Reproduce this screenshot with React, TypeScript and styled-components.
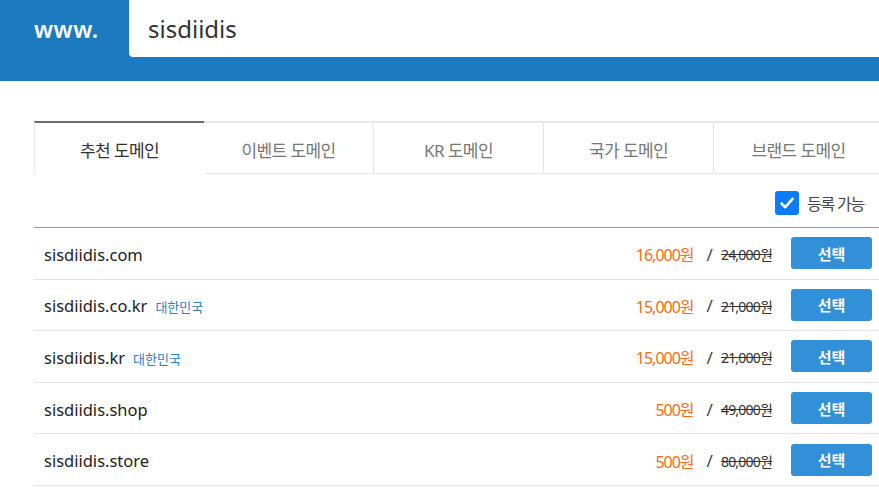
import React from 'react'
import styled, { createGlobalStyle } from 'styled-components'

const GlobalStyle = createGlobalStyle`
  html, body {
    margin: 0;
    padding: 0;
    background: #fff;
    overflow: hidden;
  }
  body {
    font-family: "Noto Sans", "Noto Sans CJK KR", sans-serif;
    color: #333;
  }
`

const Header = styled.header`
  display: flex;
  align-items: flex-start;
  height: 81px;
  background: #1c7bbf;
`

const Prefix = styled.div`
  display: flex;
  align-items: center;
  width: 95px;
  height: 57px;
  padding-left: 34px;
  color: #fff;
  font-size: 23px;
  font-weight: 600;
  letter-spacing: 0.5px;
`

const SearchBox = styled.div`
  flex: 1;
  display: flex;
  align-items: center;
  height: 57px;
  padding-left: 19px;
  background: #fff;
  border-bottom-left-radius: 4px;
  font-size: 24px;
  color: #333;
`

const Main = styled.main`
  width: 850px;
  margin: 40px 0 0 34px;
`

const Tabs = styled.div`
  display: grid;
  grid-template-columns: repeat(5, 170px);
`

const Tab = styled.div<{ $active?: boolean }>`
  display: flex;
  align-items: center;
  justify-content: center;
  box-sizing: border-box;
  height: 53px;
  padding-top: 2px;
  border-top: 2px solid ${p => (p.$active ? '#6b6b6b' : '#e8e8e8')};
  border-right: ${p => (p.$active ? 'none' : '1px solid #e6e6e6')};
  border-left: ${p => (p.$active ? '1px solid #e6e6e6' : 'none')};
  border-bottom: 1px solid ${p => (p.$active ? 'transparent' : '#e6e6e6')};
  font-size: 17px;
  color: ${p => (p.$active ? '#333' : '#777')};
  letter-spacing: -0.6px;
`

const FilterRow = styled.div`
  display: flex;
  justify-content: flex-end;
  align-items: center;
  box-sizing: border-box;
  height: 53px;
  padding: 4px 20px 0 0;
`

const CheckLabel = styled.label`
  display: flex;
  align-items: center;
  gap: 8px;
  font-size: 16px;
  color: #444;
  letter-spacing: -1.2px;
`

const CheckBox = styled.span`
  display: inline-flex;
  align-items: center;
  justify-content: center;
  width: 24px;
  height: 24px;
  border-radius: 3px;
  background: #0b7bff;
`

const Table = styled.div`
  border-top: 1px solid #9a9a9a;
`

const Row = styled.div`
  display: flex;
  align-items: center;
  box-sizing: border-box;
  height: 51.6px;
  padding: 2px 12px 0 10px;
  border-bottom: 1px solid #e3e3e3;
`

const Domain = styled.div`
  flex: 1;
  font-size: 16.5px;
  color: #222;
`

const Country = styled.span`
  margin-left: 8px;
  font-size: 13px;
  color: #2a7fc8;
`

const Price = styled.span`
  font-size: 16px;
  color: #ff6a13;
  letter-spacing: -1px;
`

const Slash = styled.span`
  margin: 0 8px 0 13px;
  font-size: 17px;
  color: #444;
`

const OldPrice = styled.span`
  font-size: 14px;
  color: #333;
  text-decoration: line-through;
  letter-spacing: -0.8px;
`

const SelectButton = styled.button`
  width: 81px;
  height: 32px;
  margin: -2px 0 0 19px;
  border: none;
  border-radius: 3px;
  background: #3190d7;
  color: #fff;
  font-family: inherit;
  font-size: 15px;
  font-weight: 600;
`

const tabs = ['추천 도메인', '이벤트 도메인', 'KR 도메인', '국가 도메인', '브랜드 도메인']

const rows = [
  { name: 'sisdiidis.com', price: '16,000원', old: '24,000원' },
  { name: 'sisdiidis.co.kr', country: '대한민국', price: '15,000원', old: '21,000원' },
  { name: 'sisdiidis.kr', country: '대한민국', price: '15,000원', old: '21,000원' },
  { name: 'sisdiidis.shop', price: '500원', old: '49,000원' },
  { name: 'sisdiidis.store', price: '500원', old: '80,000원' },
]

export default function App() {
  return (
    <>
      <GlobalStyle />
      <Header>
        <Prefix>www.</Prefix>
        <SearchBox>sisdiidis</SearchBox>
      </Header>
      <Main>
        <Tabs>
          {tabs.map((t, i) => (
            <Tab key={t} $active={i === 0}>{t}</Tab>
          ))}
        </Tabs>
        <FilterRow>
          <CheckLabel>
            <CheckBox>
              <svg width="16" height="16" viewBox="0 0 16 16">
                <path d="M2.5 8.5 L6.3 12.2 L13.5 3.8" fill="none" stroke="#fff" strokeWidth="2.6" strokeLinecap="round" strokeLinejoin="round" />
              </svg>
            </CheckBox>
            등록 가능
          </CheckLabel>
        </FilterRow>
        <Table>
          {rows.map(r => (
            <Row key={r.name}>
              <Domain>
                {r.name}
                {r.country && <Country>{r.country}</Country>}
              </Domain>
              <Price>{r.price}</Price>
              <Slash>/</Slash>
              <OldPrice>{r.old}</OldPrice>
              <SelectButton>선택</SelectButton>
            </Row>
          ))}
        </Table>
      </Main>
    </>
  )
}
